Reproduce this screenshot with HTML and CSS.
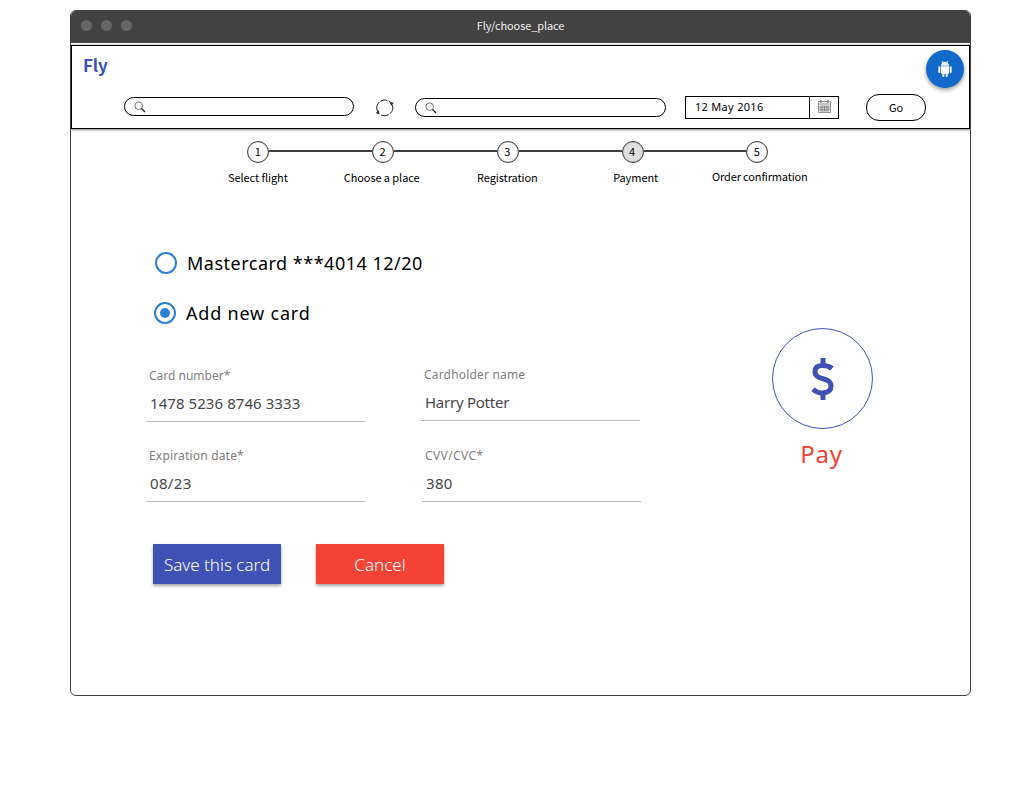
FILE: index.html
```html
<!DOCTYPE html>
<html lang="en">
<head>
<meta charset="utf-8">
<title>Fly/choose_place</title>
<link rel="stylesheet" href="styles.css">
</head>
<body>
<div class="window">
  <div class="titlebar">
    <div class="dots"><i class="dot"></i><i class="dot"></i><i class="dot"></i></div>
    <div class="title">Fly/choose_place</div>
  </div>
  <header class="header">
    <div class="brand">Fly</div>
    <div class="search search-from">
      <svg class="lens" viewBox="0 0 12 12"><circle cx="4.7" cy="4.7" r="3.8" fill="none" stroke="#555" stroke-width=".8"/><path d="M7.5 7.5 11 11" stroke="#222" stroke-width="1.3"/></svg>
    </div>
    <svg class="swap" viewBox="0 0 20 18"><g fill="none" stroke="#222" stroke-width="1"><path d="M2.700 12.500A8 8 0 0 1 4.500 3"/><path d="M5.300 2.300A8 8 0 0 1 12.500 1.300"/><path d="M13.500 1.700A8 8 0 0 1 16.500 4.200"/><path d="M17 5.500A8 8 0 0 1 15 14.700"/><path d="M13.800 15.600A8 8 0 0 1 6.200 16.200"/></g><path d="M14.500 3.800 18.800 3.400 16.500 6.800zM.8 14.300 3.600 11.300 4.600 15.300z" fill="#222"/></svg>
    <div class="search search-to">
      <svg class="lens" viewBox="0 0 12 12"><circle cx="4.7" cy="4.7" r="3.8" fill="none" stroke="#555" stroke-width=".8"/><path d="M7.5 7.5 11 11" stroke="#222" stroke-width="1.3"/></svg>
    </div>
    <div class="date">
      <span class="date-value">12 May 2016</span>
      <span class="date-button"><svg class="calendar" viewBox="0 0 13 13"><g fill="none" stroke="#777" stroke-width=".8"><path d="M.5 1.5h12v11H.5zM.5 4h12M2 6h9v5H2zM2 7.7h9M2 9.4h9M4.2 6v5M6.5 6v5M8.8 6v5"/><path d="M3 0v3M10 0v3" stroke-width="1.3"/></g></svg></span>
    </div>
    <div class="go">Go</div>
    <div class="android">
      <svg class="robot" viewBox="0 0 24 24"><path fill="#fff" d="M6 18c0 .55.45 1 1 1h1v3.500a1.500 1.500 0 0 0 3 0V19h2v3.500a1.500 1.500 0 0 0 3 0V19h1c.55 0 1-.45 1-1V8H6v10zM3.500 8A1.500 1.500 0 0 0 2 9.500v7a1.500 1.500 0 0 0 3 0v-7A1.500 1.500 0 0 0 3.500 8zm17 0A1.500 1.500 0 0 0 19 9.500v7a1.500 1.500 0 0 0 3 0v-7A1.500 1.500 0 0 0 20.500 8zm-4.970-5.840 1.300-1.300a.5.5 0 0 0-.71-.71l-1.480 1.480A5.840 5.840 0 0 0 12 1c-.96 0-1.860.23-2.660.630L7.850.150a.5.5 0 0 0-.71.710l1.310 1.310A5.983 5.983 0 0 0 6 7h12c0-1.990-.97-3.750-2.470-4.840zM10 5H9V4h1v1zm5 0h-1V4h1v1z"/></svg>
    </div>
  </header>
  <div class="steps">
    <div class="step step-1"><span class="num">1</span><span class="step-label">Select flight</span></div>
    <div class="step step-2"><span class="num">2</span><span class="step-label">Choose a place</span></div>
    <div class="step step-3"><span class="num">3</span><span class="step-label">Registration</span></div>
    <div class="step step-4 current"><span class="num">4</span><span class="step-label">Payment</span></div>
    <div class="step step-5"><span class="num">5</span><span class="step-label">Order confirmation</span></div>
  </div>
  <main class="main">
    <section class="form">
      <div class="option option-saved"><i class="radio"></i><span class="option-text">Mastercard ***4014 12/20</span></div>
      <div class="option option-new"><i class="radio radio-on"></i><span class="option-text">Add new card</span></div>
      <div class="fields">
        <div class="field f-number"><span class="label">Card number*</span><span class="value">1478 5236 8746 3333</span></div>
        <div class="field f-name"><span class="label">Cardholder name</span><span class="value">Harry Potter</span></div>
        <div class="field f-date"><span class="label">Expiration date*</span><span class="value">08/23</span></div>
        <div class="field f-cvv"><span class="label">CVV/CVC*</span><span class="value">380</span></div>
      </div>
      <div class="actions"><div class="btn save">Save this card</div><div class="btn cancel">Cancel</div></div>
    </section>
    <aside class="pay">
      <div class="coin"><svg class="dollar" viewBox="0 0 24 44"><path d="M12 1v7M12 35v8" stroke="#3f51b5" stroke-width="5"/><path d="M21 11.500C17 8 4 6 4 14.500 4 24 20 19.500 20 29c0 8-12 9-18 3.200" fill="none" stroke="#3f51b5" stroke-width="5"/></svg></div>
      <div class="pay-text">Pay</div>
    </aside>
  </main>
</div>
</body>
</html>
```
FILE: styles.css
```css
* { box-sizing: border-box; }
body { margin: 0; padding: 10px 0 0 70px; background: #fff; color: #000; font-family: "Noto Sans CJK SC", sans-serif; }
.window { width: 901px; height: 686px; border: 1px solid #424242; border-radius: 6px; overflow: hidden; background: #fff; }
.titlebar { height: 32px; background: #424242; display: grid; grid-template-columns: 100px 1fr 100px; align-items: center; }
.dots { display: flex; gap: 9px; padding-left: 10px; margin-top: -4px; }
.dot { width: 11px; height: 11px; border-radius: 50%; background: #666; }
.title { color: #eee; font-size: 11px; line-height: 16px; letter-spacing: -.1px; text-align: center; margin-top: -4px; }
.header { margin-top: 2px; height: 84px; border: 1px solid #000; box-shadow: 0 1px 2px rgba(0,0,0,.5), 0 -1px 0 #ddd; display: flex; align-items: flex-start; position: relative; }
.brand { width: 52px; padding: 8px 0 0 11px; font: 700 17px/22px "Noto Sans CJK SC", sans-serif; letter-spacing: -.2px; color: #3f51b5; }
.search { height: 19px; border: 1px solid #000; border-radius: 10px; padding: 3px 0 0 9px; }
.search-from { width: 230px; margin-top: 51px; }
.search-to { width: 251px; margin: 52px 0 0 20px; }
.lens { width: 12px; height: 12px; display: block; }
.swap { width: 20px; height: 18px; margin: 53px 0 0 21px; }
.date { display: flex; width: 154px; height: 23px; border: 1px solid #000; margin: 50px 0 0 19px; }
.date-value { width: 124px; border-right: 1px solid #000; padding-left: 9px; font: 11px/20px "Noto Sans", sans-serif; letter-spacing: .3px; }
.date-button { padding: 3px 0 0 8px; }
.calendar { width: 13px; height: 13px; display: block; }
.go { width: 60px; height: 27px; margin: 48px 0 0 27px; border: 1px solid #000; border-radius: 13px; text-align: center; font: 11px/24px "Noto Sans CJK SC", sans-serif; }
.android { position: absolute; right: 5px; top: 4px; width: 38px; height: 38px; border-radius: 50%; background: #1269c9; box-shadow: 0 2px 4px rgba(0,0,0,.4); display: grid; place-items: center; }
.robot { width: 16px; height: 16px; }
.steps { display: grid; grid-template-columns: repeat(5, 124.75px); margin: 12px 0 0 125px; height: 54px; font-size: 11px; line-height: 16px; }
.step { display: grid; grid-template-columns: 1fr 22px 1fr; grid-template-rows: 22px 1fr; row-gap: 6px; justify-items: center; }
.num { grid-column: 2; width: 22px; height: 22px; border: 1px solid #424242; border-radius: 50%; line-height: 18px; text-align: center; box-shadow: inset 0 0 1px #777; padding-right: 1px; }
.current .num { background: #e0e0e0; }
.step::before, .step::after { content: ""; height: 2px; width: 100%; background: #424242; grid-row: 1; margin-top: 9px; }
.step::before { grid-column: 1; }
.step::after { grid-column: 3; }
.step-1::before, .step-5::after { visibility: hidden; }
.step-label { grid-column: 1 / -1; white-space: nowrap; letter-spacing: -.08px; }
.step-1 .step-label { margin-left: -1px; }
.step-2 .step-label { margin-left: -3px; }
.step-3 .step-label { margin-left: -1px; }
.step-4 .step-label { margin-left: 6px; }
.step-5 .step-label { margin: -1px 0 0 5px; letter-spacing: -.15px; }
.main { display: flex; font-family: "Noto Sans", sans-serif; }
.form { width: 635px; padding: 56px 0 0 75px; }
.option { display: flex; align-items: center; height: 24px; gap: 10px; font-size: 18px; line-height: 24px; letter-spacing: .5px; }
.option-saved { margin-left: 9px; }
.option-new { margin: 26px 0 0 8px; letter-spacing: .8px; }
.radio { width: 22px; height: 22px; border: 2px solid #3080d0; border-radius: 50%; display: grid; place-items: center; }
.radio-on::after { content: ""; width: 10px; height: 10px; border-radius: 50%; background: #3080d0; }
.fields { display: grid; grid-template-columns: 219px 219px; column-gap: 56px; row-gap: 23px; margin-top: 40px; }
.field { height: 57px; border-bottom: 1px solid #bbb; display: flex; flex-direction: column; padding-left: 3px; }
.f-name { margin: -1px 0 1px; }
.f-cvv { margin-left: 1px; margin-right: -1px; }
.label { font-size: 12px; line-height: 20px; color: #808080; margin-top: 1px; }
.f-name .label, .f-date .label { letter-spacing: .18px; }
.f-cvv .label { letter-spacing: .4px; }
.value { font-size: 15px; line-height: 22px; margin: 6px 0 0 1px; color: #484848; }
.f-number .value { letter-spacing: .07px; }
.f-name .value { letter-spacing: -.25px; }
.f-date .value, .f-cvv .value { letter-spacing: .35px; }
.actions { display: flex; gap: 35px; margin: 42px 0 0 7px; }
.btn { width: 128px; height: 40px; color: #fff; font: 300 17px/41px "Noto Sans", sans-serif; text-align: center; box-shadow: 0 2px 3px rgba(0,0,0,.35); }
.save { background: #3f51b5; }
.cancel { background: #f44336; }
.pay { padding: 133px 0 0 66px; width: 167px; display: flex; flex-direction: column; align-items: center; }
.coin { width: 101px; height: 101px; border: 1px solid #3f51b5; border-radius: 50%; display: grid; place-items: center; }
.dollar { width: 24px; height: 44px; }
.pay-text { font-size: 24px; line-height: 32px; letter-spacing: .8px; margin: 9px 2px 0 0; color: #f44336; }
```
